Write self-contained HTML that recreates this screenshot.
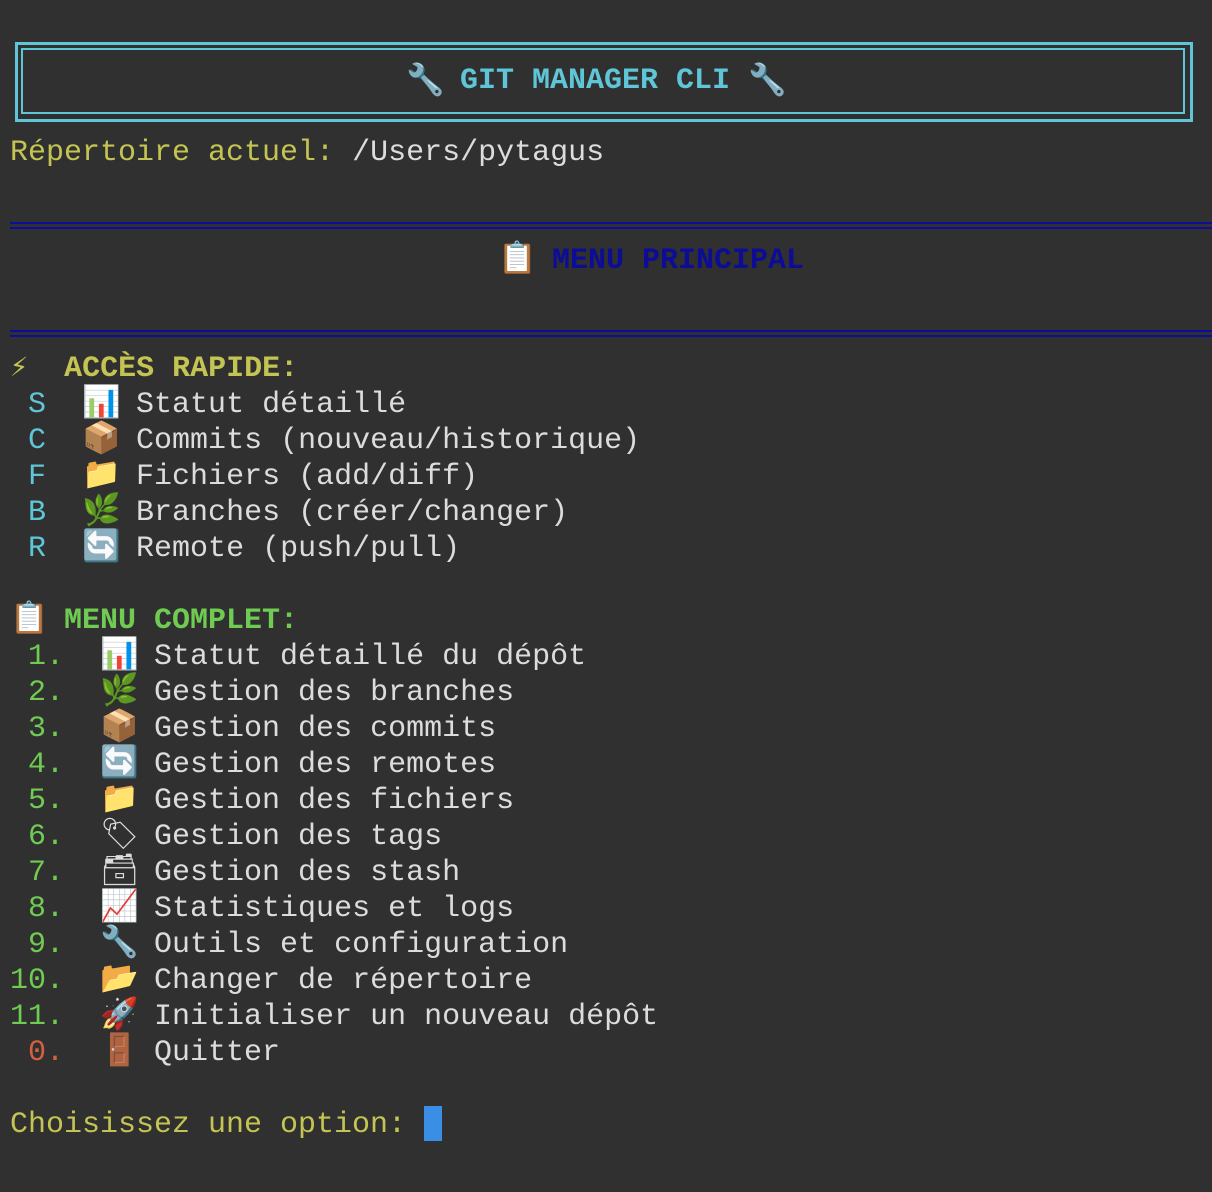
<!DOCTYPE html>
<html><head><meta charset="utf-8"><style>
body{margin:0;background:#303030;width:1212px;height:1192px;overflow:hidden;position:relative;font-family:"Liberation Mono","DejaVu Sans Mono",monospace;font-size:30px;color:#dcdcdc}
.l{position:absolute;left:10px;white-space:pre;line-height:36px;height:36px;margin-top:2px}
.y{color:#c4c452}.c{color:#5ec6d6}.g{color:#6fcb52}.r{color:#d5603f}.b{font-weight:bold}
.e{display:inline-block;width:36px;text-align:center;font-size:31px;line-height:30px;font-family:"DejaVu Sans",sans-serif}
.dl{position:absolute;left:10px;right:0;height:2px;background:#0d0d9c}
.box{position:absolute;border:3px solid #5ec6d6}
</style></head><body>
<div class="box" style="left:15px;top:42px;width:1172px;height:74px"></div>
<div class="box" style="left:21px;top:48px;width:1160px;height:62px;border-width:2px"></div>
<div class="l" style="top:61px;left:406px"><span class="e" style="vertical-align:-2px">🔧</span><span class="c b"> GIT MANAGER CLI </span><span class="e" style="vertical-align:-2px">🔧</span></div>
<div class="l" style="top:133px"><span class="y">Répertoire actuel:</span> /Users/pytagus</div>
<div class="dl" style="top:222px"></div><div class="dl" style="top:227px"></div>
<div class="l" style="top:241px;left:498px"><span class="e">📋</span><span class="b" style="color:#0c0c96"> MENU PRINCIPAL</span></div>
<div class="dl" style="top:330px"></div><div class="dl" style="top:335px"></div>
<div class="l y" style="top:349px"><span class="b">⚡  ACCÈS RAPIDE:</span></div>
<div class="l" style="top:385px"> <span class="c">S</span>  <span class="e">📊</span> Statut détaillé</div>
<div class="l" style="top:421px"> <span class="c">C</span>  <span class="e">📦</span> Commits (nouveau/historique)</div>
<div class="l" style="top:457px"> <span class="c">F</span>  <span class="e">📁</span> Fichiers (add/diff)</div>
<div class="l" style="top:493px"> <span class="c">B</span>  <span class="e">🌿</span> Branches (créer/changer)</div>
<div class="l" style="top:529px"> <span class="c">R</span>  <span class="e">🔄</span> Remote (push/pull)</div>
<div class="l" style="top:601px"><span class="e">📋</span><span class="g b"> MENU COMPLET:</span></div>
<div class="l" style="top:637px"><span class="g"> 1. </span> <span class="e">📊</span> Statut détaillé du dépôt</div>
<div class="l" style="top:673px"><span class="g"> 2. </span> <span class="e">🌿</span> Gestion des branches</div>
<div class="l" style="top:709px"><span class="g"> 3. </span> <span class="e">📦</span> Gestion des commits</div>
<div class="l" style="top:745px"><span class="g"> 4. </span> <span class="e">🔄</span> Gestion des remotes</div>
<div class="l" style="top:781px"><span class="g"> 5. </span> <span class="e">📁</span> Gestion des fichiers</div>
<div class="l" style="top:817px"><span class="g"> 6. </span> <span class="e">🏷</span> Gestion des tags</div>
<div class="l" style="top:853px"><span class="g"> 7. </span> <span class="e">🗃</span> Gestion des stash</div>
<div class="l" style="top:889px"><span class="g"> 8. </span> <span class="e">📈</span> Statistiques et logs</div>
<div class="l" style="top:925px"><span class="g"> 9. </span> <span class="e">🔧</span> Outils et configuration</div>
<div class="l" style="top:961px"><span class="g">10. </span> <span class="e">📂</span> Changer de répertoire</div>
<div class="l" style="top:997px"><span class="g">11. </span> <span class="e">🚀</span> Initialiser un nouveau dépôt</div>
<div class="l" style="top:1033px"><span class="r"> 0. </span> <span class="e">🚪</span> Quitter</div>
<div class="l" style="top:1105px"><span class="y">Choisissez une option:</span> </div>
<div style="position:absolute;left:424px;top:1106px;width:18px;height:35px;background:#3a8ee6"></div>
</body></html>
